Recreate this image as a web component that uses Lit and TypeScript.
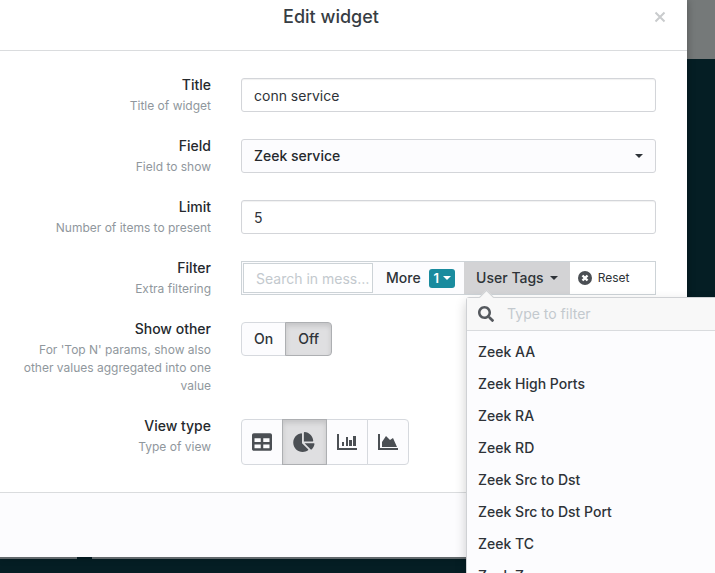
import { LitElement, html, css, svg } from "lit";
import { customElement, state } from "lit/decorators.js";

const TAGS = [
  "Zeek AA",
  "Zeek High Ports",
  "Zeek RA",
  "Zeek RD",
  "Zeek Src to Dst",
  "Zeek Src to Dst Port",
  "Zeek TC",
  "Zeek Zone",
];

const caret = html`<svg class="caret" viewBox="0 0 8 4" aria-hidden="true"><path d="M0 0h8L4 4z" /></svg>`;

const VIEWS = [
  {
    id: "table",
    label: "Table",
    width: 20,
    box: "0 32 512 448",
    art: svg`<path d="M464 32H48C21.500 32 0 53.500 0 80v352c0 26.500 21.500 48 48 48h416c26.500 0 48-21.500 48-48V80c0-26.500-21.500-48-48-48zM224 416H64v-96h160v96zm0-160H64v-96h160v96zm224 160H288v-96h160v96zm0-160H288v-96h160v96z"/>`,
  },
  {
    id: "pie",
    label: "Pie chart",
    width: 23,
    box: "0 0 576 512",
    art: svg`<path d="M527.790 288H290.500l158.030 158.030c6.040 6.040 15.980 6.530 22.190.68 38.700-36.460 65.320-85.610 73.130-140.860 1.340-9.460-6.510-17.850-16.060-17.850zm-15.830-64.800C503.720 103.740 408.260 8.280 288.800.04 279.680-.59 272 7.100 272 16.240V240h223.770c9.140 0 16.820-7.680 16.190-16.800zM224 288V50.710c0-9.550-8.390-17.400-17.840-16.060C86.990 51.490-4.100 155.600.14 280.370 4.500 408.510 114.830 513.590 243.030 511.980c50.400-.63 96.970-16.870 135.260-44.030 7.900-5.600 8.420-17.230 1.570-24.080L224 288z"/>`,
  },
  {
    id: "bars",
    label: "Bar chart",
    width: 20,
    box: "0 0 20 16",
    art: svg`<path d="M0 0h2v14h18v2H0zM5 8h2v4H5zM9 3h2v9H9zM12 6h3v6h-3zM16 2h3v10h-3z"/>`,
  },
  {
    id: "area",
    label: "Area chart",
    width: 20,
    box: "0 0 20 16",
    art: svg`<path d="M0 0h2v14h18v2H0zM4 13V8l4-6 4 4 3-2 4 9z"/>`,
  },
];

@customElement("app-root")
export class AppRoot extends LitElement {
  @state() private view = "pie";
  @state() private other = "off";

  static styles = css`
    * {
      box-sizing: border-box;
    }
    :host {
      display: block;
      height: 100vh;
      overflow: hidden;
      background: linear-gradient(#757979 59px, #051e24 59px);
      color: #2e3338;
      font: 500 14px/20px Inter, "Liberation Sans", sans-serif;
    }
    input,
    button,
    select {
      font: inherit;
      color: inherit;
      margin: 0;
    }
    button {
      cursor: pointer;
    }
    svg {
      display: block;
      fill: currentColor;
    }
    .modal {
      margin-right: 28px;
      background: #fff;
      box-shadow: 0 0 8px rgba(0, 0, 0, 0.3);
    }
    .head {
      display: grid;
      grid-template-columns: 1fr auto;
      align-items: center;
      padding: 4px 19px 20px 0;
      border-bottom: 1px solid #dadcde;
    }
    .heading {
      margin: 0;
      padding-left: 10px;
      font-size: 18px;
      line-height: 26px;
      font-weight: 500;
      text-align: center;
      color: #373d43;
    }
    .close {
      display: grid;
      place-items: center;
      width: 16px;
      height: 16px;
      padding: 0;
      border: 0;
      background: none;
      color: #c9cbcd;
    }
    .close svg {
      width: 12px;
      height: 12px;
      fill: none;
      stroke: currentColor;
      stroke-width: 2;
    }
    .body {
      display: grid;
      gap: 21px;
      padding: 24px 31px 27px 0;
    }
    .row {
      display: grid;
      grid-template-columns: 211px minmax(0, 1fr);
      column-gap: 30px;
      align-items: start;
    }
    .text {
      padding-left: 16px;
      text-align: right;
    }
    .label {
      display: block;
      color: #25292d;
    }
    .help {
      margin: 2px 0 0;
      font-size: 12px;
      line-height: 18px;
      font-weight: 400;
      color: #90979d;
    }
    .control {
      padding-top: 3px;
    }
    .field {
      display: block;
      width: 100%;
      height: 34px;
      padding: 0 12px;
      border: 1px solid #d3d5d9;
      border-radius: 3px;
      background: #fff;
      box-shadow: inset 0 1px 1px rgba(0, 0, 0, 0.06);
      font-weight: 400;
    }
    .pick {
      position: relative;
    }
    .pick .field {
      appearance: none;
      background: #fcfcfe;
      box-shadow: none;
      font-weight: 500;
      color: #25292d;
    }
    .caret {
      width: 8px;
      height: 4px;
      flex: none;
    }
    .pick .caret {
      position: absolute;
      right: 13px;
      top: 15px;
      pointer-events: none;
    }
    .filter {
      display: flex;
      height: 34px;
      border: 1px solid #cdd3d7;
      background: #fff;
    }
    .search {
      flex: none;
      width: 132px;
      padding: 1px;
      background: #fcfcfe;
    }
    .search input {
      width: 130px;
      height: 30px;
      padding: 0 0 0 12px;
      border: 1px solid #cdd3d7;
      background: #fff;
      font-weight: 400;
      text-overflow: ellipsis;
    }
    ::placeholder {
      color: #c3c9ce;
      opacity: 1;
    }
    .more,
    .tags,
    .reset {
      display: flex;
      align-items: center;
      height: 100%;
      border: 0;
      padding: 0 12px;
      background: #fcfcfe;
      white-space: nowrap;
    }
    .more {
      gap: 8px;
      padding-right: 9px;
    }
    .badge {
      display: flex;
      align-items: center;
      gap: 4px;
      height: 19px;
      padding: 0 4px 0 5px;
      border-radius: 3px;
      background: #198b9e;
      color: #fff;
      font-size: 13px;
      font-weight: 600;
    }
    .anchor {
      position: relative;
    }
    .tags {
      gap: 6px;
      background: #d3d3d5;
    }
    .reset {
      gap: 6px;
      padding: 0 8px;
      background: none;
      font-size: 12px;
      font-weight: 400;
    }
    .reset svg {
      width: 14px;
      height: 14px;
      color: #4b4f54;
    }
    .menu {
      position: absolute;
      z-index: 2;
      left: 2px;
      top: 35px;
      width: 280px;
      border: 1px solid #cfd1d4;
      border-radius: 3px;
      background: #fcfcfe;
      box-shadow: 0 5px 12px rgba(0, 0, 0, 0.2);
    }
    .menu::before {
      content: "";
      position: absolute;
      left: 14px;
      top: -6px;
      width: 10px;
      height: 10px;
      border: 1px solid #cfd1d4;
      border-width: 1px 0 0 1px;
      background: #f8f8f8;
      transform: rotate(45deg);
    }
    .find {
      position: relative;
      display: flex;
      align-items: center;
      gap: 13px;
      height: 33px;
      padding: 0 11px;
      border-bottom: 1px solid #d9dbde;
      background: #f8f8f8;
    }
    .find svg {
      width: 16px;
      height: 16px;
      color: #55595e;
    }
    .find input {
      flex: 1;
      min-width: 0;
      padding: 0;
      border: 0;
      outline: 0;
      background: none;
      font-weight: 400;
    }
    .list {
      margin: 0;
      padding: 5px 0;
      list-style: none;
    }
    .item {
      display: block;
      width: 100%;
      padding: 6px 11px;
      border: 0;
      background: none;
      text-align: left;
    }
    .group {
      display: flex;
      margin: 0;
      padding: 0;
      border: 0;
    }
    .option {
      position: relative;
      display: grid;
      place-items: center;
      height: 34px;
      padding: 0 12px;
      border: 1px solid #d6d9de;
      background: #fcfcfe;
      cursor: pointer;
    }
    .option + .option {
      margin-left: -1px;
    }
    .option:first-child {
      border-radius: 4px 0 0 4px;
    }
    .option:last-child {
      border-radius: 0 4px 4px 0;
    }
    .option input {
      position: absolute;
      inset: 0;
      opacity: 0;
    }
    .option.on {
      z-index: 1;
      border-color: #adafb2;
      background: #dfdfe1;
      box-shadow: inset 0 3px 5px rgba(0, 0, 0, 0.12);
    }
    .icons .option {
      height: 46px;
      padding: 0 10px;
      color: #4b4f54;
    }
    .icons svg {
      height: 20px;
    }
    .foot {
      height: 65px;
      border-top: 1px solid #dadcde;
      background: #fcfcfe;
    }
    .edge {
      display: grid;
      grid-template-columns: 77px 15px 1fr;
      height: 2px;
    }
    .edge i {
      background: #62696c;
    }
    .edge i:nth-child(2) {
      background: none;
    }
  `;

  private row(label: string, help: string, control: unknown, target = "") {
    return html`<div class="row">
      <div class="text">
        ${target
          ? html`<label class="label" for=${target}>${label}</label>`
          : html`<span class="label">${label}</span>`}
        <p class="help">${help}</p>
      </div>
      <div class="control">${control}</div>
    </div>`;
  }

  private filter() {
    return html`<div class="filter">
      <div class="search">
        <input id="filter" type="text" placeholder="Search in mess…" />
      </div>
      <button class="more" type="button">More <span class="badge">1 ${caret}</span></button>
      <div class="anchor">
        <button class="tags" type="button" aria-expanded="true">User Tags ${caret}</button>
        <div class="menu">
          <div class="find">
            <svg viewBox="0 0 512 512" aria-hidden="true">
              <path d="M505 442.700L405.300 343c-4.500-4.500-10.600-7-17-7H372c27.600-35.300 44-79.700 44-128C416 93.100 322.900 0 208 0S0 93.100 0 208s93.100 208 208 208c48.300 0 92.700-16.400 128-44v16.300c0 6.400 2.500 12.500 7 17l99.700 99.700c9.400 9.400 24.600 9.400 33.900 0l28.300-28.300c9.400-9.400 9.400-24.600.1-34zM208 336c-70.700 0-128-57.200-128-128 0-70.700 57.200-128 128-128 70.700 0 128 57.200 128 128 0 70.700-57.200 128-128 128z" />
            </svg>
            <input type="text" placeholder="Type to filter" aria-label="Type to filter" />
          </div>
          <ul class="list">
            ${TAGS.map((t) => html`<li><button class="item" type="button">${t}</button></li>`)}
          </ul>
        </div>
      </div>
      <button class="reset" type="button">
        <svg viewBox="0 0 14 14" aria-hidden="true">
          <circle cx="7" cy="7" r="7" />
          <path d="M4.500 4.500l5 5M9.500 4.500l-5 5" stroke="#fff" stroke-width="2.400" />
        </svg>
        Reset
      </button>
    </div>`;
  }

  render() {
    return html`
      <section class="modal" role="dialog" aria-labelledby="heading">
        <header class="head">
          <h1 class="heading" id="heading">Edit widget</h1>
          <button class="close" type="button" aria-label="Close">
            <svg viewBox="0 0 12 12"><path d="M1.500 1.500l9 9M10.500 1.500l-9 9" /></svg>
          </button>
        </header>
        <div class="body">
          ${this.row("Title", "Title of widget",
            html`<input class="field" id="title" type="text" value="conn service" />`, "title")}
          ${this.row("Field", "Field to show",
            html`<div class="pick">
              <select class="field" id="field"><option>Zeek service</option></select>
              ${caret}
            </div>`, "field")}
          ${this.row("Limit", "Number of items to present",
            html`<input class="field" id="limit" type="text" value="5" />`, "limit")}
          ${this.row("Filter", "Extra filtering", this.filter(), "filter")}
          ${this.row("Show other",
            "For 'Top N' params, show also other values aggregated into one value",
            html`<fieldset class="group" aria-label="Show other">
              ${["On", "Off"].map((o) => {
                const id = o.toLowerCase();
                return html`<label class="option ${this.other === id ? "on" : ""}">
                  <input type="radio" name="other" .checked=${this.other === id}
                    @change=${() => (this.other = id)} />${o}
                </label>`;
              })}
            </fieldset>`)}
          ${this.row("View type", "Type of view",
            html`<fieldset class="group icons" aria-label="View type">
              ${VIEWS.map((v) => html`<label class="option ${this.view === v.id ? "on" : ""}">
                <input type="radio" name="view" aria-label=${v.label} .checked=${this.view === v.id}
                  @change=${() => (this.view = v.id)} />
                <svg viewBox=${v.box} width=${v.width} aria-hidden="true">${v.art}</svg>
              </label>`)}
            </fieldset>`)}
        </div>
        <footer class="foot"></footer>
      </section>
      <div class="edge"><i></i><i></i><i></i></div>
    `;
  }
}
